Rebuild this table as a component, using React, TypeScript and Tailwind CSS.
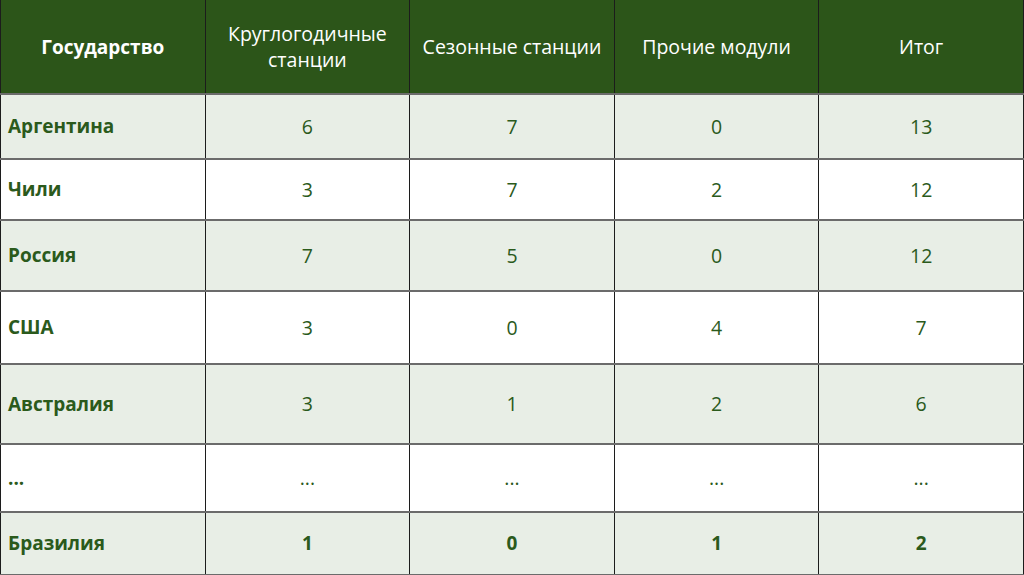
const header = ["Государство", "Круглогодичные станции", "Сезонные станции", "Прочие модули", "Итог"];

const rows: { name: string; values: string[]; h: string; bold?: boolean }[] = [
  { name: "Аргентина", values: ["6", "7", "0", "13"], h: "h-[65px]" },
  { name: "Чили", values: ["3", "7", "2", "12"], h: "h-[61px]" },
  { name: "Россия", values: ["7", "5", "0", "12"], h: "h-[71px]" },
  { name: "США", values: ["3", "0", "4", "7"], h: "h-[73px]" },
  { name: "Австралия", values: ["3", "1", "2", "6"], h: "h-[80px]" },
  { name: "...", values: ["...", "...", "...", "..."], h: "h-[68px]" },
  { name: "Бразилия", values: ["1", "0", "1", "2"], h: "h-[63px]", bold: true },
];

export default function App() {
  return (
    <div className="w-[1024px] h-[575px] overflow-hidden bg-white font-['Open_Sans',sans-serif]">
      <table className="w-[1024px] table-fixed border-collapse text-[19.5px]">
        <thead>
          <tr className="h-[94px] bg-[#2c5519] text-white">
            {header.map((h, i) => (
              <th
                key={h}
                className={`border-x border-[#1c1c1c] px-2 text-center leading-[26px] ${i === 0 ? "font-bold text-[19px]" : "font-normal"}`}
              >
                {i === 1 ? (
                  <>
                    Круглогодичные
                    <br />
                    станции
                  </>
                ) : (
                  h
                )}
              </th>
            ))}
          </tr>
        </thead>
        <tbody>
          {rows.map((r, ri) => (
            <tr key={r.name} className={`${r.h} ${ri % 2 === 0 ? "bg-[#e8eee6]" : "bg-white"} text-[#2b5a1c]`}>
              <td className="border-x border-x-[#1c1c1c] border-y-2 border-y-[#6b6b6b] pl-[7px] text-[19px] font-bold">
                {r.name}
              </td>
              {r.values.map((v, vi) => (
                <td
                  key={vi}
                  className={`border-x border-x-[#1c1c1c] border-y-2 border-y-[#6b6b6b] text-center ${r.bold ? "font-bold text-[19px]" : ""}`}
                >
                  {v}
                </td>
              ))}
            </tr>
          ))}
        </tbody>
      </table>
    </div>
  );
}
